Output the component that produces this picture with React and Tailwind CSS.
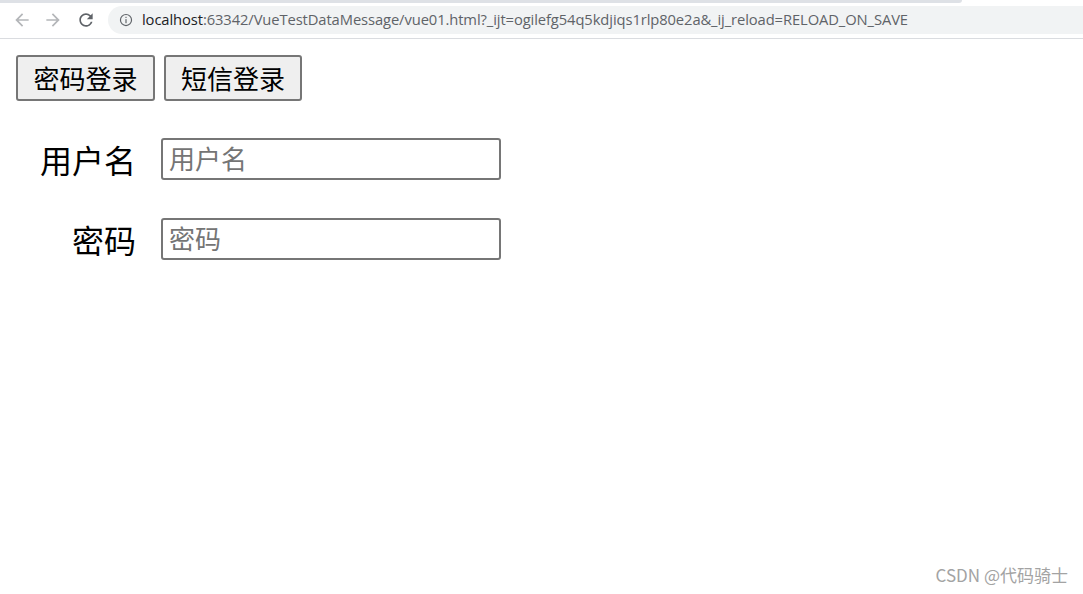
import React, { useState } from 'react';

const cjk = { fontFamily: '"Microsoft YaHei", "Noto Sans CJK SC", "Liberation Sans", sans-serif' };

const BrowserBar = () => (
  <div className="relative h-[39px] border-b border-[#dadce0] bg-white">
    {/* tab strip edge */}
    <div className="absolute left-0 top-0 h-[3px] w-[962px] rounded-br-[6px] bg-[#dee1e6]" />
    <div className="flex h-full items-center pl-[12px] pt-[1px]">
      <svg width="20" height="20" viewBox="0 0 24 24" className="text-[#b4b6b9]">
        <path d="M20 11H7.83l5.59-5.59L12 4l-8 8 8 8 1.41-1.41L7.83 13H20v-2z" fill="currentColor" />
      </svg>
      <svg width="20" height="20" viewBox="0 0 24 24" className="ml-[11px] text-[#b4b6b9]">
        <path d="M12 4l-1.41 1.41L16.17 11H4v2h12.17l-5.58 5.59L12 20l8-8z" fill="currentColor" />
      </svg>
      <svg width="20" height="20" viewBox="0 0 24 24" className="ml-[13px] text-[#5f6368]">
        <path d="M17.65 6.35A7.958 7.958 0 0 0 12 4c-4.42 0-7.990 3.58-7.99 8s3.57 8 7.99 8c3.73 0 6.84-2.55 7.73-6h-2.08A5.99 5.99 0 0 1 12 18c-3.31 0-6-2.69-6-6s2.69-6 6-6c1.66 0 3.14.69 4.22 1.78L13 11h7V4l-2.35 2.35z" fill="currentColor" />
      </svg>
      <div className="ml-[12px] flex h-[28px] flex-1 items-center rounded-l-full bg-[#f1f3f4] pl-[11px]">
        <svg width="14" height="14" viewBox="0 0 24 24" className="text-[#5f6368]">
          <circle cx="12" cy="12" r="9.5" fill="none" stroke="currentColor" strokeWidth="2" />
          <rect x="11" y="10.5" width="2" height="7" fill="currentColor" />
          <rect x="11" y="6.5" width="2" height="2" fill="currentColor" />
        </svg>
        <span
          className="ml-[9px] text-[14.75px] tracking-[-0.1px] text-[#5f6368]"
          style={{ fontFamily: '"Open Sans", "Liberation Sans", sans-serif' }}
        >
          <span className="text-[#202124]">localhost</span>:63342/VueTestDataMessage/vue01.html?_ijt=ogilefg54q5kdjiqs1rlp80e2a&amp;_ij_reload=RELOAD_ON_SAVE
        </span>
      </div>
    </div>
  </div>
);

const App = () => {
  const [mode, setMode] = useState('password');

  return (
    <div className="h-[594px] w-full overflow-hidden bg-white" style={cjk}>
      <BrowserBar />

      <div className="px-[16px] pt-[16px]">
        {/* Login type switch */}
        <div className="flex gap-[9px]">
          <button
            className="h-[46px] w-[139px] rounded-[3px] border-2 border-[#767676] bg-[#efefef] text-[26px] leading-none text-black"
            onClick={() => setMode('password')}
          >
            密码登录
          </button>
          <button
            className="h-[46px] w-[138px] rounded-[3px] border-2 border-[#767676] bg-[#efefef] text-[26px] leading-none text-black"
            onClick={() => setMode('sms')}
          >
            短信登录
          </button>
        </div>

        {/* Form */}
        <div className="mt-[37px] flex flex-col gap-[38px]">
          <div className="flex items-center">
            <label className="w-[120px] text-right text-[32px] leading-none text-black">用户名</label>
            <input
              className="ml-[25px] h-[42px] w-[340px] rounded-[3px] border-2 border-[#767676] px-[6px] pb-[3px] text-[26px] outline-none placeholder:text-[#757575]"
              placeholder="用户名"
            />
          </div>
          <div className="flex items-center">
            <label className="w-[120px] text-right text-[32px] leading-none text-black">密码</label>
            <input
              type={mode === 'password' ? 'password' : 'text'}
              className="ml-[25px] h-[42px] w-[340px] rounded-[3px] border-2 border-[#767676] px-[6px] pb-[3px] text-[26px] outline-none placeholder:text-[#757575]"
              placeholder="密码"
            />
          </div>
        </div>
      </div>

      <div className="absolute bottom-[7px] right-[15px] text-[17px] text-[#a3a3a3]">CSDN @代码骑士</div>
    </div>
  );
};

export default App;
